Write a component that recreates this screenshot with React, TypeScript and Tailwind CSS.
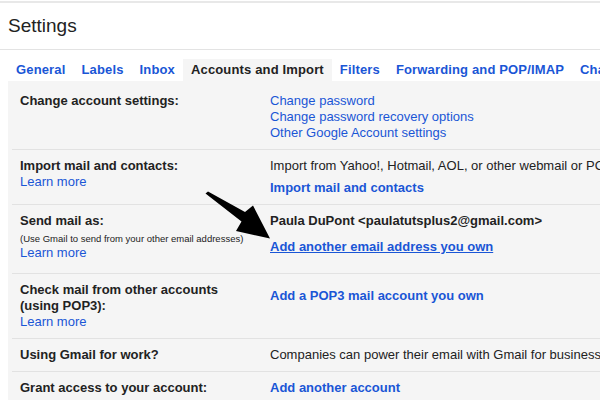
import React from "react";

const tabs = [
  "General",
  "Labels",
  "Inbox",
  "Accounts and Import",
  "Filters",
  "Forwarding and POP/IMAP",
  "Chat",
];

function Row({
  label,
  children,
  className = "",
}: {
  label: React.ReactNode;
  children: React.ReactNode;
  className?: string;
}) {
  return (
    <div className={`flex ${className}`}>
      <div className="w-[258px] shrink-0 pl-2">{label}</div>
      <div className="whitespace-nowrap">{children}</div>
    </div>
  );
}

const link = "text-[#1a56d6]";

export default function App() {
  return (
    <div className="relative w-[600px] h-[400px] overflow-hidden bg-white font-['Liberation_Sans',Arial,sans-serif] text-[13px] leading-4 text-[#222]">
      <div className="h-[1px] bg-white" />
      <div className="h-[2px] bg-[#e8e8e8]" />
      <div className="h-[47px] flex items-center pl-2 border-b border-[#e3e3e3]">
        <h1 className="text-[19px] leading-6 text-[#222] pb-[1px]">Settings</h1>
      </div>

      <div className="flex pl-2 mt-[9px] h-[22px] font-bold whitespace-nowrap tracking-[0.15px]">
        {tabs.map((t) => (
          <div
            key={t}
            className={
              t === "Accounts and Import"
                ? "px-2 flex items-center bg-[#f5f5f5] text-[#222]"
                : "px-2 flex items-center text-[#1a56d6]"
            }
          >
            {t}
          </div>
        ))}
      </div>

      <div className="ml-2 bg-[#f5f5f5] pt-1 pl-1 h-[400px]">
        <Row label={<b>Change account settings:</b>} className="pt-2 pb-2">
          <div className={link}>Change password</div>
          <div className={link}>Change password recovery options</div>
          <div className={link}>Other Google Account settings</div>
        </Row>

        <Row
          className="pt-2 pb-2 border-t border-[#e2e2e2]"
          label={
            <>
              <b>Import mail and contacts:</b>
              <div className={link}>Learn more</div>
            </>
          }
        >
          <div>Import from Yahoo!, Hotmail, AOL, or other webmail or POP3 accounts.</div>
          <div className={`${link} font-bold mt-[6px]`}>Import mail and contacts</div>
        </Row>

        <Row
          className="pt-2 pb-3 border-t border-[#e2e2e2]"
          label={
            <>
              <b>Send mail as:</b>
              <div className="text-[9.5px] leading-3 mt-1 whitespace-nowrap">
                (Use Gmail to send from your other email addresses)
              </div>
              <div className={link}>Learn more</div>
            </>
          }
        >
          <div className="font-bold">Paula DuPont &lt;paulatutsplus2@gmail.com&gt;</div>
          <div className={`${link} font-bold underline mt-[10px]`}>
            Add another email address you own
          </div>
        </Row>

        <Row
          className="pt-2 pb-2 border-t border-[#e2e2e2]"
          label={
            <>
              <b>
                Check mail from other accounts
                <br />
                (using POP3):
              </b>
              <div className={link}>Learn more</div>
            </>
          }
        >
          <div className={`${link} font-bold mt-[6px]`}>Add a POP3 mail account you own</div>
        </Row>

        <Row
          className="pt-2 pb-2 border-t border-[#e2e2e2]"
          label={<b>Using Gmail for work?</b>}
        >
          <div>Companies can power their email with Gmail for businesses.</div>
        </Row>

        <Row
          className="pt-2 pb-2 border-t border-[#e2e2e2]"
          label={<b>Grant access to your account:</b>}
        >
          <div className={`${link} font-bold`}>Add another account</div>
        </Row>
      </div>

      <svg
        className="absolute left-0 top-0 pointer-events-none"
        width="600"
        height="400"
        viewBox="0 0 600 400"
      >
        <path
          d="M205.5 193.5 L208 191.5 L245 212 L253 205.5 L270 238.5 L236 231 L241.5 221.5 Z"
          fill="#000"
        />
      </svg>
    </div>
  );
}
